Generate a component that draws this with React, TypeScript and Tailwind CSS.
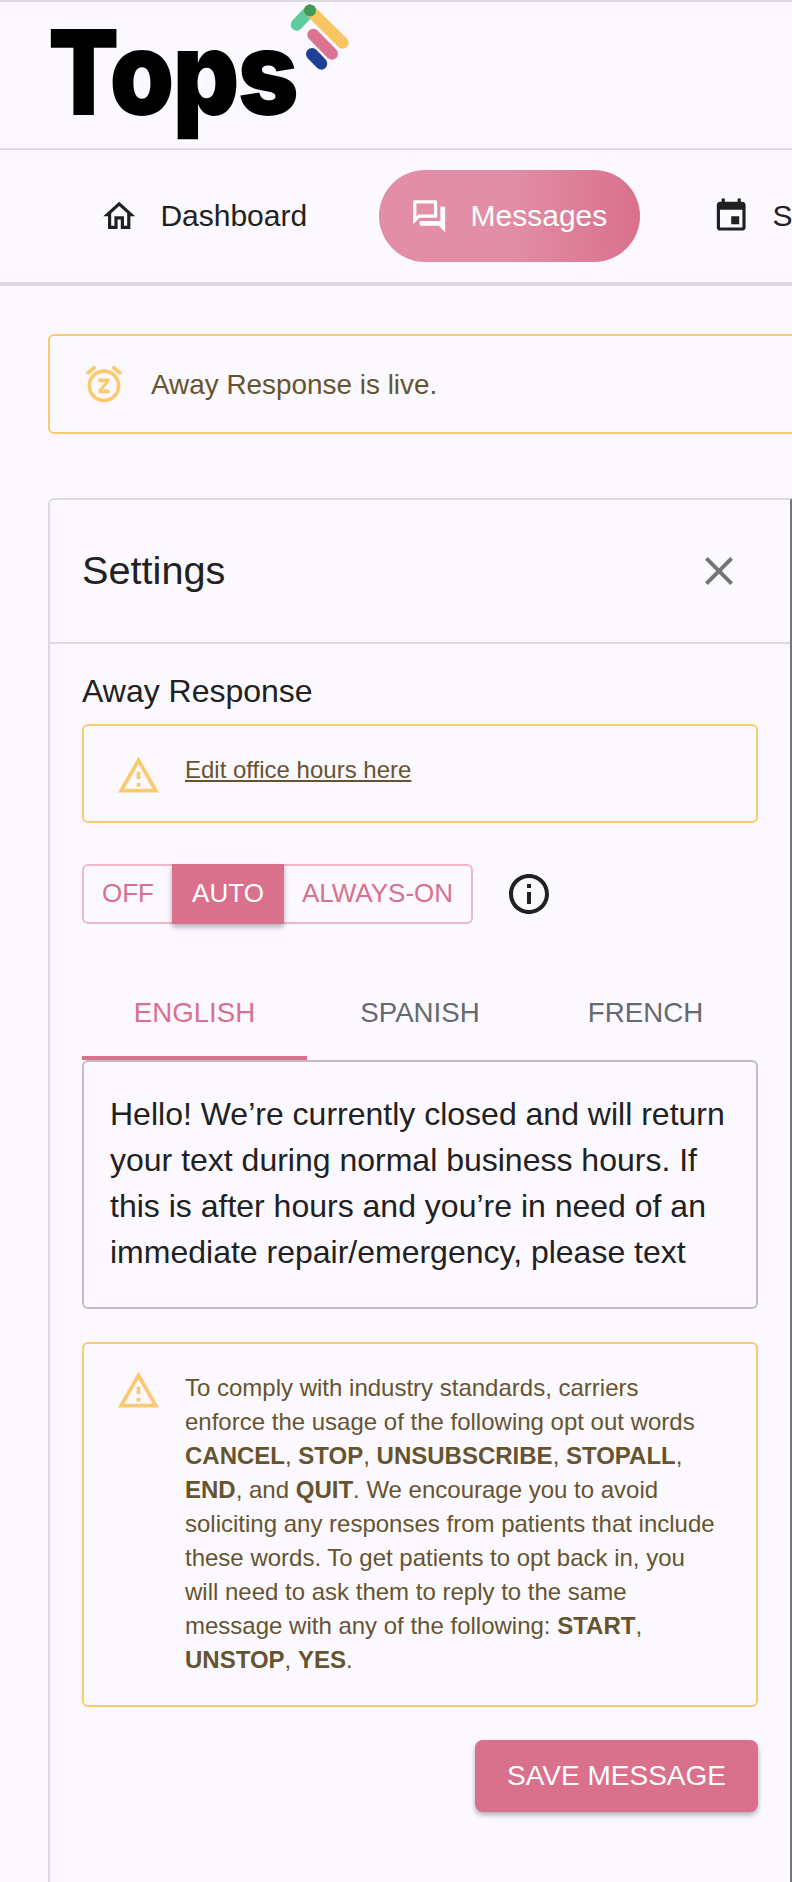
import type { ReactNode } from "react";

const sans = "font-['Liberation_Sans',Arial,sans-serif]";

function MuiIcon({ d, className }: { d: string; className: string }) {
  return (
    <svg viewBox="0 0 24 24" fill="currentColor" className={className}>
      <path d={d} />
    </svg>
  );
}

const icons = {
  home: "m12 5.69 5 4.5V18h-2v-6H9v6H7v-7.81l5-4.5M12 3 2 12h3v8h6v-6h2v6h6v-8h3L12 3z",
  forum:
    "M15 4v7H5.17l-.59.59-.58.58V4h11m1-2H3c-.55 0-1 .45-1 1v14l4-4h10c.55 0 1-.45 1-1V3c0-.55-.45-1-1-1zm5 4h-2v9H6v2c0 .55.45 1 1 1h11l4 4V7c0-.55-.45-1-1-1z",
  event:
    "M17 12h-5v5h5v-5zM16 1v2H8V1H6v2H5c-1.11 0-1.99.9-1.99 2L3 19c0 1.1.89 2 2 2h14c1.1 0 2-.9 2-2V5c0-1.1-.9-2-2-2h-1V1h-2zm3 18H5V8h14v11z",
  snooze:
    "M9 11h3.63L9 15.2V17h6v-2h-3.63L15 10.8V9H9v2zm7.056-7.654 1.282-1.535 4.607 3.85-1.28 1.54zM3.336 7.19l-1.28-1.536L6.662 1.81l1.28 1.536zM12 6c3.86 0 7 3.14 7 7s-3.14 7-7 7-7-3.14-7-7 3.14-7 7-7m0-2c-4.97 0-9 4.03-9 9s4.03 9 9 9 9-4.03 9-9-4.03-9-9-9z",
  warning:
    "M12 5.99 19.53 19H4.47L12 5.99M12 2 1 21h22L12 2zm1 14h-2v2h2v-2zm0-6h-2v4h2v-4z",
  info: "M11 7h2v2h-2zm0 4h2v6h-2zm1-9C6.48 2 2 6.48 2 12s4.48 10 10 10 10-4.48 10-10S17.52 2 12 2zm0 18c-4.41 0-8-3.59-8-8s3.59-8 8-8 8 3.59 8 8-3.59 8-8 8z",
  close:
    "M19 6.41 17.59 5 12 10.59 6.41 5 5 6.41 10.59 12 5 17.59 6.41 19 12 13.41 17.59 19 19 17.59 13.41 12z",
};

function Logo() {
  return (
    <div className="relative h-[146px] w-[360px]">
      <span className="absolute left-[48px] top-[0px] origin-left scale-x-[0.88] font-['Inter',sans-serif] text-[118px] leading-[140px] font-black tracking-[-2px] text-black">
        Tops
      </span>
      <svg viewBox="0 0 60 70" className="absolute left-[290px] top-0 h-[70px] w-[60px]" fill="none" strokeLinecap="round">
        <path d="M6.7 22.7 20 8.5" stroke="#5dcb9e" strokeWidth="12" />
        <path d="M20 8.5 52.7 40.7" stroke="#f8c562" strokeWidth="12" />
        <circle cx="20" cy="8.5" r="6" fill="#3f9a57" />
        <path d="M23.3 32.7 42 51.7" stroke="#dc7390" strokeWidth="12" />
        <path d="M22 52 31.3 61.7" stroke="#1f3e96" strokeWidth="12" />
      </svg>
    </div>
  );
}

function YellowBox({ className, children }: { className: string; children: ReactNode }) {
  return (
    <div className={`rounded-[6px] border-2 border-[#fbc96f] text-[#66542f] ${className}`}>
      {children}
    </div>
  );
}

export default function App() {
  return (
    <div className={`h-[1882px] w-[792px] overflow-hidden bg-[#fbf9ff] text-[#212121] ${sans}`}>
      <header className="h-[150px] border-t-2 border-b-2 border-[#dcdae0]">
        <Logo />
      </header>

      <nav className="flex h-[136px] w-[1000px] items-center border-b-4 border-[#dcdae0] text-[30px]">
        <div className="ml-[100px] flex items-center gap-[22px]">
          <MuiIcon d={icons.home} className="h-[38.4px] w-[38.4px]" />
          <span className="-mt-[2px]">Dashboard</span>
        </div>
        <div className="ml-[72px] flex h-[92px] w-[261px] items-center gap-[22px] rounded-[46px] bg-gradient-to-r from-[#e28ea6] via-[#e28ea6] to-[#d9708c] pl-[31px] text-white">
          <MuiIcon d={icons.forum} className="h-[38.4px] w-[38.4px]" />
          <span className="-mt-[2px]">Messages</span>
        </div>
        <div className="ml-[72px] flex items-center gap-[22px]">
          <MuiIcon d={icons.event} className="h-[38.4px] w-[38.4px]" />
          <span className="-mt-[2px]">Schedule</span>
        </div>
      </nav>

      <main className="w-[1000px] pl-[48px] pt-[48px]">
        <YellowBox className="flex h-[100px] w-[900px] items-center gap-[25px] pl-[32px] text-[27.9px]">
          <MuiIcon d={icons.snooze} className="h-[44px] w-[44px] text-[#fbc96f]" />
          <span className="mt-[2px]">Away Response is live.</span>
        </YellowBox>

        <section className="mt-[64px] w-[744px] rounded-tl-[6px] border-t-2 border-l-2 border-r-2 border-[#dcdae0] border-r-[#777777]">
          <div className="flex h-[144px] items-center justify-between border-b-2 border-[#dcdae0] pr-[47px] pl-[32px]">
            <h2 className="text-[39.7px]">Settings</h2>
            <MuiIcon d={icons.close} className="h-[48px] w-[48px] text-[#757575]" />
          </div>

          <div className="w-[740px] px-[32px] pt-[28px]">
            <h3 className="text-[32px] leading-[38px]">Away Response</h3>

            <YellowBox className="mt-[14px] flex h-[99px] gap-[24px] pl-[32px] pt-[27px] text-[24px]">
              <MuiIcon d={icons.warning} className="h-[45px] w-[45px] text-[#fbc96f]" />
              <a className="mt-[-1px] h-fit underline">Edit office hours here</a>
            </YellowBox>

            <div className="mt-[41px] flex items-center">
              <div className="flex h-[60px] w-[391px] rounded-[6px] border-2 border-[#efb8c8] text-[26px] text-[#d9708c]">
                <div className="flex w-[88px] items-center justify-center pb-[2px]">OFF</div>
                <div className="-my-[2px] flex w-[112px] items-center justify-center bg-[#d9708c] pb-[2px] text-white shadow-[0_3px_5px_rgba(0,0,0,0.3)]">
                  AUTO
                </div>
                <div className="flex flex-1 items-center justify-center pb-[2px]">ALWAYS-ON</div>
              </div>
              <MuiIcon d={icons.info} className="ml-[32px] h-[48px] w-[48px]" />
            </div>

            <div className="mt-[60px] flex h-[76px] text-[27.7px] text-[#666a70]">
              <div className="flex w-[225px] items-center justify-center border-b-4 border-[#d9708c] pb-[14px] text-[#d9708c]">ENGLISH</div>
              <div className="flex w-[226px] items-center justify-center pb-[18px]">SPANISH</div>
              <div className="flex w-[225px] items-center justify-center pb-[18px]">FRENCH</div>
            </div>

            <div className="h-[249px] rounded-[6px] border-2 border-[#bfbdc3] px-[26px] pt-[29px] text-[32px] leading-[46px]">
              Hello! We’re currently closed and will return your text during normal business hours. If this is after hours and you’re in need of an immediate repair/emergency, please text
            </div>

            <YellowBox className="mt-[33px] flex h-[365px] pt-[26px] pl-[32px] pr-[38px]">
              <MuiIcon d={icons.warning} className="mt-[-2px] h-[45px] w-[45px] shrink-0 text-[#fbc96f]" />
              <p className="ml-[24px] pt-[1px] text-[24px] leading-[34px]">
                To comply with industry standards, carriers enforce the usage of the following opt out words <b>CANCEL</b>, <b>STOP</b>, <b>UNSUBSCRIBE</b>, <b>STOPALL</b>, <b>END</b>, and <b>QUIT</b>. We encourage you to avoid soliciting any responses from patients that include these words. To get patients to opt back in, you will need to ask them to reply to the same message with any of the following: <b>START</b>, <b>UNSTOP</b>, <b>YES</b>.
              </p>
            </YellowBox>

            <div className="mt-[33px] flex justify-end">
              <button className="h-[72px] w-[283px] rounded-[8px] bg-[#d9708c] text-[28px] text-white shadow-[0_3px_5px_rgba(0,0,0,0.3)]">
                SAVE MESSAGE
              </button>
            </div>
            <div className="h-[72px]" />
          </div>
        </section>
      </main>
    </div>
  );
}
